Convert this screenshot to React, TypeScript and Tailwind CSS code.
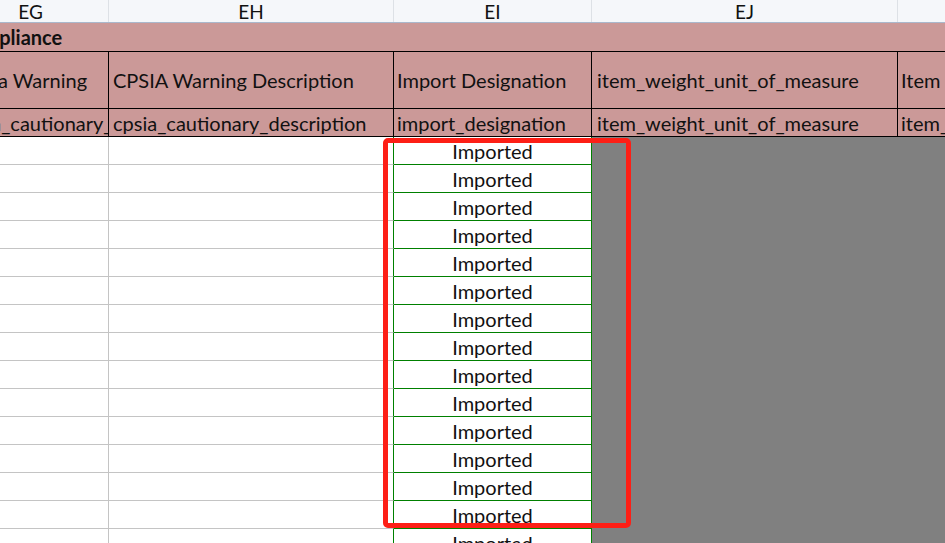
import React from "react";

const font = { fontFamily: "Lato, 'Noto Sans', sans-serif" };

const rows = Array.from({ length: 15 }, (_, i) => i);

const App: React.FC = () => {
  return (
    <div
      className="relative w-[945px] h-[543px] overflow-hidden bg-white text-[#111111]"
      style={font}
    >
      <div className="ml-[-47px] w-[1145px]">
        {/* column letters */}
        <div className="flex h-[23px] border-b border-[#aab8cc] bg-[#f5f7fa] text-[19px] leading-none">
          <div className="w-[156px] flex items-center justify-center border-r border-[#dde1e6]">EG</div>
          <div className="w-[285px] flex items-center justify-center border-r border-[#dde1e6]">EH</div>
          <div className="w-[198px] flex items-center justify-center border-r border-[#dde1e6]">EI</div>
          <div className="w-[306px] flex items-center justify-center border-r border-[#dde1e6]">EJ</div>
          <div className="w-[200px] flex items-center justify-center">EK</div>
        </div>

        {/* group row */}
        <div className="flex items-end h-[29px] pb-[4px] border-b border-black bg-[#cb9998] text-[20px] font-bold leading-none whitespace-nowrap">
          <span className="pl-[5px]">Compliance</span>
        </div>

        {/* header row */}
        <div className="flex h-[57px] border-b border-black bg-[#cb9998] text-[20px] leading-none whitespace-nowrap">
          <div className="w-[156px] flex items-center pl-[7px] border-r border-black overflow-hidden">Cpsia Warning</div>
          <div className="w-[285px] flex items-center pl-[4px] border-r border-black overflow-hidden">CPSIA Warning Description</div>
          <div className="w-[198px] flex items-center pl-[3px] border-r border-black overflow-hidden">Import Designation</div>
          <div className="w-[306px] flex items-center pl-[5px] border-r border-black overflow-hidden">item_weight_unit_of_measure</div>
          <div className="w-[200px] flex items-center pl-[3px] overflow-hidden">Item Weight Unit Of Measure</div>
        </div>

        {/* key row */}
        <div className="flex h-[28px] border-b border-black bg-[#cb9998] text-[20px] leading-none whitespace-nowrap">
          <div className="w-[156px] flex items-center pl-[4px] pt-[1px] border-r border-black overflow-hidden">cpsia_cautionary_statement</div>
          <div className="w-[285px] flex items-center pl-[4px] pt-[1px] border-r border-black overflow-hidden">cpsia_cautionary_description</div>
          <div className="w-[198px] flex items-center pl-[3px] pt-[1px] border-r border-black overflow-hidden">import_designation</div>
          <div className="w-[306px] flex items-center pl-[5px] pt-[1px] border-r border-black overflow-hidden">item_weight_unit_of_measure</div>
          <div className="w-[200px] flex items-center pl-[3px] pt-[1px] overflow-hidden">item_weight_unit_of_measure</div>
        </div>

        {/* data rows */}
        {rows.map((r) => (
          <div key={r} className="flex h-[28px] text-[20px] leading-none">
            <div className="w-[156px] border-r border-b border-[#c4c4c4]"></div>
            <div className="w-[285px] border-r border-b border-[#c4c4c4] border-r-[#008000]"></div>
            <div className="w-[198px] flex items-center justify-center pt-[1px] border-r border-b border-[#008000]">Imported</div>
            <div className="w-[506px] bg-[#808080]"></div>
          </div>
        ))}
      </div>

      {/* highlight box */}
      <div className="absolute left-[383px] top-[138px] w-[248px] h-[390px] border-[5px] border-[#fd1f16] rounded-[5px]"></div>
    </div>
  );
};

export default App;
